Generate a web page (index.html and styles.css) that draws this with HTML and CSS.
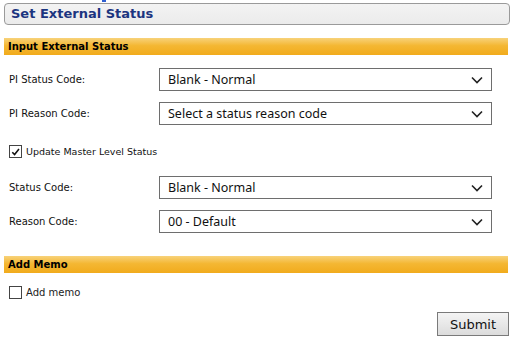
FILE: index.html
```html
<!DOCTYPE html>
<html lang="en">
<head>
  <meta charset="UTF-8" />
  <title>Set External Status</title>
  <link rel="stylesheet" href="styles.css">
</head>
<body>
  <div class="page">
    <div class="top-link"></div>
    <h2 class="title">Set External Status</h2>

    <form class="status-form">
      <div class="section-head">Input External Status</div>

      <div class="row first">
        <label class="field-label" for="piStatus">PI Status Code:</label>
        <div class="select-box" id="piStatus">
          <span>Blank - Normal</span>
          <svg class="chev" viewBox="0 0 12 8" width="12" height="8"><path d="M1 1.5 L6 6.5 L11 1.5" fill="none" stroke="#222" stroke-width="1.6"/></svg>
        </div>
      </div>

      <div class="row">
        <label class="field-label" for="piReason">PI Reason Code:</label>
        <div class="select-box" id="piReason">
          <span>Select a status reason code</span>
          <svg class="chev" viewBox="0 0 12 8" width="12" height="8"><path d="M1 1.5 L6 6.5 L11 1.5" fill="none" stroke="#222" stroke-width="1.6"/></svg>
        </div>
      </div>

      <label class="check-row master">
        <span class="box checked">
          <svg viewBox="0 0 12 12" width="12" height="12"><path d="M2.5 6.2 L5 8.8 L9.8 2.8" fill="none" stroke="#111" stroke-width="1.7"/></svg>
        </span>
        Update Master Level Status
      </label>

      <div class="row">
        <label class="field-label" for="statusCode">Status Code:</label>
        <div class="select-box" id="statusCode">
          <span>Blank - Normal</span>
          <svg class="chev" viewBox="0 0 12 8" width="12" height="8"><path d="M1 1.5 L6 6.5 L11 1.5" fill="none" stroke="#222" stroke-width="1.6"/></svg>
        </div>
      </div>

      <div class="row">
        <label class="field-label" for="reasonCode">Reason Code:</label>
        <div class="select-box" id="reasonCode">
          <span>00 - Default</span>
          <svg class="chev" viewBox="0 0 12 8" width="12" height="8"><path d="M1 1.5 L6 6.5 L11 1.5" fill="none" stroke="#222" stroke-width="1.6"/></svg>
        </div>
      </div>

      <div class="section-head memo-head">Add Memo</div>

      <label class="check-row memo">
        <span class="box"></span>
        Add memo
      </label>

      <div class="buttons">
        <button type="button" class="submit">Submit</button>
      </div>
    </form>
  </div>
</body>
</html>
```

FILE: styles.css
```css
* {
  box-sizing: border-box;
}
body {
  margin: 0;
  background: #fff;
  font-family: "DejaVu Sans", Verdana, sans-serif;
  color: #111;
}
.page {
  width: 512px;
  height: 341px;
  overflow: hidden;
  padding: 0 2px 0 4px;
}
.top-link {
  width: 4px;
  height: 2px;
  margin-left: 98px;
  background: #2f5fd0;
}
.title {
  margin: 1px 0 0 0;
  height: 22px;
  padding: 0 0 0 6px;
  border: 1px solid #9a9a9a;
  border-radius: 4px;
  background: linear-gradient(#f3f3f3, #ebebeb);
  font-size: 13px;
  line-height: 20px;
  font-weight: bold;
  color: #1c3580;
}
.section-head {
  height: 17px;
  margin: 13px 2px 0 0;
  padding-left: 4px;
  background: linear-gradient(#f8d27a 0%, #f4b733 45%, #f1ab1c 100%);
  font-size: 10px;
  line-height: 18px;
  font-weight: bold;
  color: #000;
}
.row {
  display: flex;
  align-items: center;
  margin-top: 11px;
}
.row.first {
  margin-top: 13px;
}
.field-label {
  width: 155px;
  padding-left: 5px;
  font-size: 10px;
  color: #111;
}
.select-box {
  width: 333px;
  height: 23px;
  border: 1px solid #6e6e6e;
  display: flex;
  align-items: center;
  justify-content: space-between;
  padding: 0 8px 0 8px;
  font-family: "Noto Sans", sans-serif;
  font-size: 12.5px;
  color: #111;
}
.chev {
  display: block;
}
.check-row {
  display: flex;
  align-items: center;
  gap: 4px;
  padding-left: 5px;
  font-size: 9.5px;
  color: #111;
}
.check-row.master {
  margin-top: 20px;
  margin-bottom: 18px;
}
.check-row.memo {
  margin-top: 13px;
  font-size: 10px;
  color: #222;
}
.box {
  width: 13px;
  height: 13px;
  border: 1px solid #444;
  background: #fff;
  display: flex;
  align-items: center;
  justify-content: center;
}
.memo-head {
  margin-top: 23px;
}
.buttons {
  display: flex;
  justify-content: flex-end;
  margin-top: 13px;
}
.submit {
  width: 72px;
  height: 24px;
  margin-right: 1px;
  border: 1px solid #7a7a7a;
  border-radius: 0;
  background: linear-gradient(#f4f4f4, #dcdcdc);
  font-family: "DejaVu Sans", Verdana, sans-serif;
  font-size: 13px;
  color: #111;
  padding: 0;
}
```
